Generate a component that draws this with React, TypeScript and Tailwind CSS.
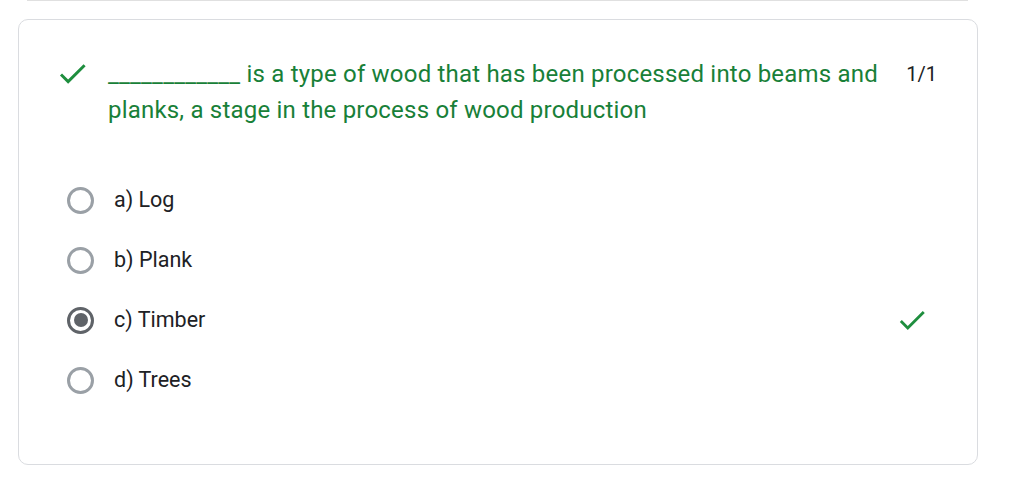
const OPTIONS = ['a) Log', 'b) Plank', 'c) Timber', 'd) Trees'];
const SELECTED = 2;

function CheckIcon({ className }: { className?: string }) {
  return (
    <svg viewBox="0 0 24 24" className={className} fill="currentColor">
      <path d="M9 16.17L4.83 12l-1.42 1.41L9 19 21 7l-1.41-1.41z" />
    </svg>
  );
}

function Radio({ checked }: { checked: boolean }) {
  return (
    <div
      className={
        'flex h-[27px] w-[27px] shrink-0 items-center justify-center rounded-full border-[3px] ' +
        (checked ? 'border-[#5f6368]' : 'border-[#9aa0a6]')
      }
    >
      {checked && <div className="h-[14px] w-[14px] rounded-full bg-[#5f6368]" />}
    </div>
  );
}

export default function App() {
  return (
    <div className="min-h-screen bg-white font-['Roboto',sans-serif]">
      <div className="ml-[27px] h-px w-[941px] bg-[#e0e0e0]" />

      <div className="ml-[18px] mt-[18px] h-[446px] w-[960px] rounded-[10px] border border-[#dadce0] bg-white pl-[36px] pr-[40px] pt-[36px]">
        {/* Question */}
        <div className="flex items-start">
          <CheckIcon className="h-[35px] w-[35px] shrink-0 text-[#1e8e3e]" />
          <p className="ml-[18px] flex-1 text-[24px] leading-[36px] tracking-[0.2px] text-[#188038]">
            ____________ is a type of wood that has been processed into beams and
            <br />
            planks, a stage in the process of wood production
          </p>
          <span className="ml-[12px] text-[20px] leading-[36px] text-[#202124]">1/1</span>
        </div>

        {/* Options */}
        <div className="mt-[42px] flex flex-col">
          {OPTIONS.map((o, i) => (
            <div key={o} className="flex h-[60px] items-center pl-[12px] pr-[8px]">
              <Radio checked={i === SELECTED} />
              <span className="ml-[20px] flex-1 text-[21.5px] text-[#202124]">{o}</span>
              {i === SELECTED && <CheckIcon className="h-[34px] w-[34px] text-[#1e8e3e]" />}
            </div>
          ))}
        </div>
      </div>
    </div>
  );
}
